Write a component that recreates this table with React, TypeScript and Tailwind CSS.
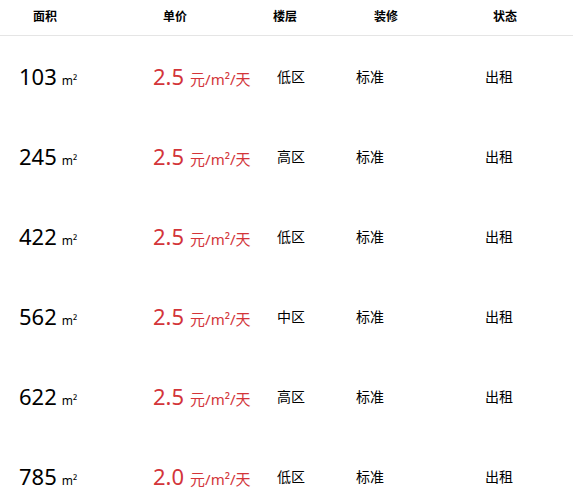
const rows = [
  { area: "103", price: "2.5", floor: "低区" },
  { area: "245", price: "2.5", floor: "高区" },
  { area: "422", price: "2.5", floor: "低区" },
  { area: "562", price: "2.5", floor: "中区" },
  { area: "622", price: "2.5", floor: "高区" },
  { area: "785", price: "2.0", floor: "低区" },
];

const font = { fontFamily: '"Noto Sans", "Noto Sans CJK SC", sans-serif' };

export default function App() {
  return (
    <div className="w-[573px] h-[496px] overflow-hidden bg-white text-black" style={font}>
      {/* header */}
      <div className="flex items-center h-[36px] border-b border-[#e5e5e5] text-[12px] font-bold leading-none pb-[2px]">
        <div className="w-[163px] pl-[33px]">面积</div>
        <div className="w-[110px]">单价</div>
        <div className="w-[101px]">楼层</div>
        <div className="w-[119px]">装修</div>
        <div className="flex-1">状态</div>
      </div>

      {rows.map((r, i) => (
        <div key={i} className="flex items-center h-[80px]">
          <div className="w-[153px] pl-[19px] flex items-baseline">
            <span className="text-[22px] leading-none">{r.area}</span>
            <span className="text-[12px] leading-none ml-[5px]">m²</span>
          </div>
          <div className="w-[124px] flex items-baseline text-[#d3353a]">
            <span className="text-[22px] leading-none">{r.price}</span>
            <span className="text-[15px] leading-none ml-[6px]">元/m²/天</span>
          </div>
          <div className="w-[79px] text-[14px] leading-none pt-[2px]">{r.floor}</div>
          <div className="w-[129px] text-[14px] leading-none pt-[2px]">标准</div>
          <div className="flex-1 text-[14px] leading-none pt-[2px]">出租</div>
        </div>
      ))}
    </div>
  );
}
